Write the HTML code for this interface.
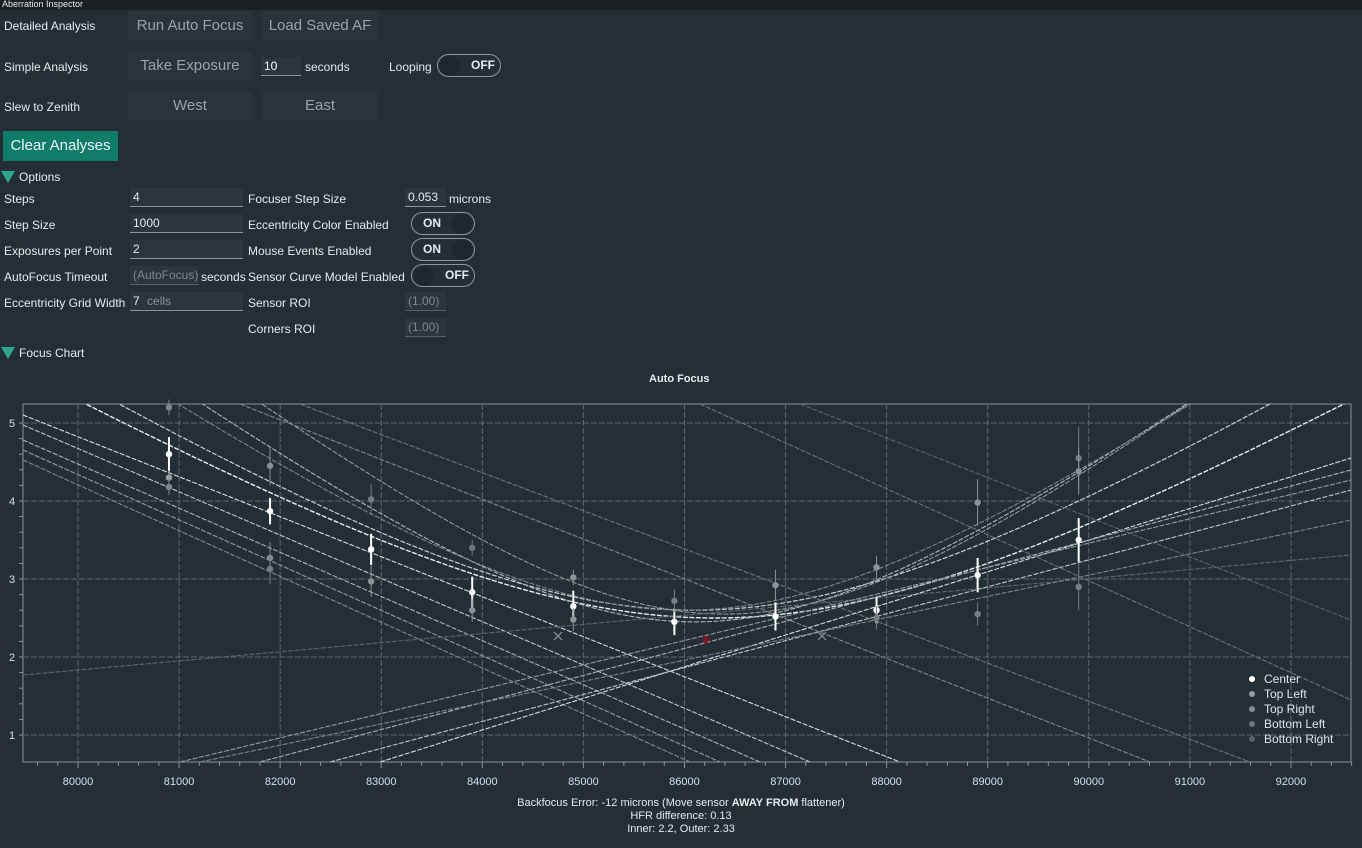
<!DOCTYPE html>
<html><head><meta charset="utf-8"><style>
body{margin:0;width:1362px;height:848px;background:#242f35;font-family:"Liberation Sans",sans-serif;color:#e6eaec;overflow:hidden;position:relative;font-size:12px}
.a{position:absolute;white-space:nowrap}
.top{position:absolute;left:0;top:0;width:1362px;height:10px;background:#1b2125;font-size:9px;line-height:9px;padding-left:2px}
.btn{position:absolute;background:#29333a;color:#9aa3a8;font-size:15px;text-align:center;line-height:30px;height:30px}
.inp{position:absolute;border-bottom:1px solid #8a9399;background:#2b353b;font-size:12px;padding-left:3px;line-height:18px;height:18px}
.tog{position:absolute;width:62px;height:21px;border:1px solid #8d979c;border-radius:12px;font-weight:bold;font-size:12px;line-height:21px}
.knob{position:absolute;top:1px;width:20px;height:20px;border-radius:50%;background:#1e272c}
.tri{position:absolute;width:0;height:0;border-left:7px solid transparent;border-right:7px solid transparent;border-top:12px solid #2aa58e}
</style></head><body>
<div class="top">Aberration Inspector</div>
<div class="a" style="left:4px;top:19px">Detailed Analysis</div>
<div class="btn" style="left:128px;top:11px;width:124px">Run Auto Focus</div>
<div class="btn" style="left:262px;top:11px;width:116px">Load Saved AF</div>
<div class="a" style="left:4px;top:60px">Simple Analysis</div>
<div class="btn" style="left:128px;top:51px;width:124px">Take Exposure</div>
<div class="inp" style="left:261px;top:57px;width:37px;color:#fff">10</div>
<div class="a" style="left:305px;top:60px">seconds</div>
<div class="a" style="left:389px;top:60px">Looping</div>
<div class="tog" style="left:437px;top:54px"><div class="knob" style="left:2px"></div><span style="position:absolute;left:33px">OFF</span></div>
<div class="a" style="left:4px;top:100px">Slew to Zenith</div>
<div class="btn" style="left:128px;top:91px;width:124px">West</div>
<div class="btn" style="left:262px;top:91px;width:116px">East</div>
<div class="btn" style="left:3px;top:131px;width:115px;background:#0f7c69;color:#f2f6f5">Clear Analyses</div>
<div class="tri" style="left:1px;top:171px"></div><div class="a" style="left:19px;top:170px">Options</div>
<div class="a" style="left:4px;top:192px">Steps</div>
<div class="inp" style="left:130px;top:188px;width:110px">4</div>
<div class="a" style="left:4px;top:218px">Step Size</div>
<div class="inp" style="left:130px;top:214px;width:110px">1000</div>
<div class="a" style="left:4px;top:244px">Exposures per Point</div>
<div class="inp" style="left:130px;top:240px;width:110px">2</div>
<div class="a" style="left:4px;top:270px">AutoFocus Timeout</div>
<div class="inp" style="left:130px;top:266px;width:66px;color:#7d878c;border-bottom-color:#555f65">(AutoFocus)</div>
<div class="a" style="left:201px;top:270px">seconds</div>
<div class="a" style="left:4px;top:296px">Eccentricity Grid Width</div>
<div class="inp" style="left:130px;top:292px;width:110px">7 <span style="color:#8a9398;margin-left:4px">cells</span></div>
<div class="a" style="left:248px;top:192px">Focuser Step Size</div>
<div class="inp" style="left:405px;top:188px;width:38px">0.053</div>
<div class="a" style="left:449px;top:192px">microns</div>
<div class="a" style="left:248px;top:218px">Eccentricity Color Enabled</div>
<div class="tog" style="left:411px;top:212px"><span style="position:absolute;left:11px">ON</span><div class="knob" style="left:40px"></div></div>
<div class="a" style="left:248px;top:244px">Mouse Events Enabled</div>
<div class="tog" style="left:411px;top:238px"><span style="position:absolute;left:11px">ON</span><div class="knob" style="left:40px"></div></div>
<div class="a" style="left:248px;top:270px">Sensor Curve Model Enabled</div>
<div class="tog" style="left:411px;top:264px"><div class="knob" style="left:2px"></div><span style="position:absolute;left:33px">OFF</span></div>
<div class="a" style="left:248px;top:296px">Sensor ROI</div>
<div class="inp" style="left:405px;top:292px;width:38px;color:#7d878c;border-bottom-color:#555f65">(1.00)</div>
<div class="a" style="left:248px;top:322px">Corners ROI</div>
<div class="inp" style="left:405px;top:318px;width:38px;color:#7d878c;border-bottom-color:#555f65">(1.00)</div>
<div class="tri" style="left:1px;top:347px"></div><div class="a" style="left:19px;top:346px">Focus Chart</div>
<div class="a" style="left:649px;top:373px;font-weight:bold;font-size:11px">Auto Focus</div>
<svg id="ch" class="a" style="left:0;top:0" width="1362" height="848"></svg>
<div class="a" style="left:0;width:1362px;text-align:center;top:797px;font-size:11px;line-height:13px">Backfocus Error: -12 microns (Move sensor <b>AWAY FROM</b> flattener)<br>HFR difference: 0.13<br>Inner: 2.2, Outer: 2.33</div>
<script>
var s='',L=23,R=1351,T=404,B=762;
function px(x){return 78+(x-80000)*0.10108}function py(v){return 423-(v-5)*78}
s+='<rect x="23" y="404" width="1328" height="358" fill="none" stroke="#8a9296"/>';
for(var k=80000;k<=92000;k+=1000){var X=px(k);s+='<line x1="'+X+'" y1="404" x2="'+X+'" y2="762" stroke="#5d676c" stroke-dasharray="6 2"/>';s+='<text x="'+X+'" y="785" fill="#cfe0ee" font-size="11" text-anchor="middle" font-family="Liberation Sans">'+k+'</text>';}
for(var k=79600;k<=92600;k+=200){var X=px(k);s+='<line x1="'+X+'" y1="762" x2="'+X+'" y2="'+(k%1000?766:768)+'" stroke="#8a9296"/>';}
for(var v=1;v<=5;v++){var Y=py(v);s+='<line x1="23" y1="'+Y+'" x2="1351" y2="'+Y+'" stroke="#5d676c" stroke-dasharray="6 2"/>';s+='<text x="9" y="'+(Y+4)+'" fill="#cfe0ee" font-size="11" font-family="Liberation Sans">'+v+'</text>';}
for(var v=1;v<=5.2;v+=0.2){var Y=py(v);s+='<line x1="19" y1="'+Y+'" x2="23" y2="'+Y+'" stroke="#8a9296"/>';}
s+='<clipPath id="c"><rect x="23" y="404" width="1328" height="358"/></clipPath><g clip-path="url(#c)" fill="none">';
function hyp(a,b,x0,col,w){var d='';for(var X=23;X<=1351;X+=8){var x=(X-78)/0.10108+80000;var v=Math.sqrt(a*a+Math.pow((x-x0)/b,2));d+=(X==23?'M':'L')+X+' '+py(v).toFixed(1);}s+='<path d="'+d+'" stroke="'+col+'" stroke-width="'+w+'" stroke-dasharray="5 1.5"/>';}
hyp(2.5,1350,86300,'#e8ecee',1.4);hyp(2.6,1250,86100,'#c9ced0',1.2);hyp(2.45,1050,86100,'#b0b6b9',1.1);hyp(2.55,1000,86400,'#9aa1a4',1);hyp(2.6,1100,86000,'#858c90',1);
function ln(a,b,c,d,col){s+='<line x1="'+a+'" y1="'+b+'" x2="'+c+'" y2="'+d+'" stroke="'+col+'" stroke-width="1.1" stroke-dasharray="5 1.5"/>';}
ln(23,415,900,762,'#d6dadc');ln(23,425,810,762,'#c0c5c7');ln(23,440,760,762,'#aab0b3');ln(23,450,720,762,'#949a9e');ln(23,460,690,762,'#80878b');
ln(240,404,1150,762,'#7f878b');ln(300,404,1250,762,'#6c7478');ln(23,675,1351,555,'#5d6569');
ln(380,762,1351,458,'#d6dadc');ln(330,762,1351,490,'#bfc4c6');ln(260,762,1351,470,'#a9afb2');ln(180,762,1351,480,'#939a9d');ln(200,762,1351,520,'#7c8387');
ln(700,404,1351,700,'#6a7276');ln(800,404,1351,620,'#5a6266');
s+='</g>';
var pts=[[80900,4.6,.22,'#fff'],[81900,3.87,.17,'#fff'],[82900,3.38,.2,'#fff'],[83900,2.83,.2,'#fff'],[84900,2.65,.2,'#fff'],[85900,2.45,.17,'#fff'],[86900,2.52,.18,'#fff'],[87900,2.6,.17,'#fff'],[88900,3.05,.22,'#fff'],[89900,3.5,.28,'#fff'],
[80900,4.3,.1,'#9a9fa2'],[80900,4.18,.1,'#7f8588'],[80900,5.2,.1,'#7f8588'],[81900,4.45,.25,'#888d90'],[81900,3.27,.2,'#888d90'],[81900,3.13,.2,'#777c80'],[82900,4.02,.2,'#777c80'],[82900,2.97,.2,'#8d9295'],[83900,3.4,.1,'#6f7579'],[83900,2.6,.15,'#8d9295'],[84900,3.02,.1,'#8d9295'],[84900,2.48,.15,'#8d9295'],[85900,2.72,.15,'#777c80'],[86900,2.92,.2,'#8d9295'],[87900,3.15,.15,'#8d9295'],[87900,2.5,.15,'#777c80'],[88900,3.98,.3,'#8d9295'],[88900,2.55,.15,'#777c80'],[89900,4.55,.4,'#777c80'],[89900,4.38,.3,'#8d9295'],[89900,2.9,.3,'#777c80']];
pts.forEach(function(p){var X=px(p[0]),Y=py(p[1]),e=p[2]*78;s+='<line x1="'+X+'" y1="'+(Y-e)+'" x2="'+X+'" y2="'+(Y+e)+'" stroke="'+p[3]+'" stroke-width="'+(p[3]=='#fff'?2:1)+'"/><circle cx="'+X+'" cy="'+Y+'" r="3.2" fill="'+p[3]+'"/>';});
s+='<path d="M554 632l8 8M562 632l-8 8M818 632l8 8M826 632l-8 8" stroke="#8d9295" stroke-width="1.2"/><path d="M706 636l4 4-4 4-4-4z" fill="#8b1020"/>';
var lg=[['Center','#fff'],['Top Left','#9a9fa2'],['Top Right','#868b8e'],['Bottom Left','#6f7579'],['Bottom Right','#5a6064']];
lg.forEach(function(l,i){var Y=679+i*15;s+='<circle cx="1252" cy="'+Y+'" r="3" fill="'+l[1]+'"/><text x="1264" y="'+(Y+4)+'" fill="#dfe6ea" font-size="12" font-family="Liberation Sans">'+l[0]+'</text>';});
document.getElementById('ch').innerHTML=s;
</script>
</body></html>
